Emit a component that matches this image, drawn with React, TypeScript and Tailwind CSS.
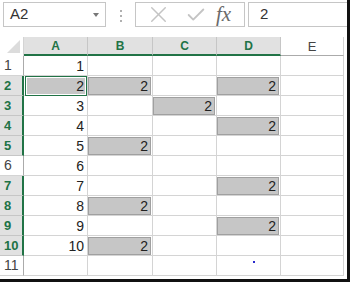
import { X, Check } from 'lucide-react';

const cols = ['A', 'B', 'C', 'D', 'E'];
const colW = ['w-[64px]', 'w-[65px]', 'w-[64px]', 'w-[64px]', 'w-[63px]'];
const selectedRows = [2, 3, 4, 5, 7, 8, 9, 10];
const grayCells: Record<number, string[]> = {
  2: ['B', 'D'],
  3: ['C'],
  4: ['D'],
  5: ['B'],
  7: ['D'],
  8: ['B'],
  9: ['D'],
  10: ['B'],
};

const font = { fontFamily: '"Liberation Sans", Arial, sans-serif' };

function Toolbar() {
  return (
    <div className="flex h-[37px] items-start pt-[2px]">
      {/* Name box */}
      <div className="ml-[3px] flex h-[25px] w-[103px] items-center border border-[#c6c6c6] pl-[6px] pr-[6px]">
        <span className="flex-1 text-[15px] text-[#333]">A2</span>
        <div className="h-0 w-0 border-x-[3.5px] border-t-[4px] border-x-transparent border-t-[#777]" />
      </div>
      {/* separator dots */}
      <div className="flex w-[29px] flex-col items-center gap-[3px] pt-[8px]">
        <div className="h-[2px] w-[2px] bg-[#b0b0b0]" />
        <div className="h-[2px] w-[2px] bg-[#b0b0b0]" />
        <div className="h-[2px] w-[2px] bg-[#b0b0b0]" />
      </div>
      {/* cancel / enter / fx */}
      <div className="flex h-[25px] w-[110px] items-center border border-[#c6c6c6]">
        <div className="flex w-[38px] justify-center pl-[7px]">
          <X size={27} strokeWidth={1.3} color="#c4c4c4" />
        </div>
        <div className="flex w-[38px] justify-center pl-[6px]">
          <Check size={22} strokeWidth={2} color="#c4c4c4" />
        </div>
        <div
          className="flex-1 pl-[4px] text-[21px] italic leading-none text-[#6a6a6a]"
          style={{ fontFamily: '"Liberation Serif", "Times New Roman", serif' }}
        >
          fx
        </div>
      </div>
      {/* formula input */}
      <div className="ml-[3px] flex h-[25px] flex-1 items-center border border-r-0 border-[#c6c6c6] pl-[11px] text-[15px] text-[#333]">
        2
      </div>
    </div>
  );
}

function HeaderRow() {
  return (
    <div className="flex h-[19px]">
      <div className="w-[24px] border-r border-[#d4d4d4]">
        <svg width="23" height="19" className="block">
          <polygon points="20,3 20,16 7,16" fill="#dcdcdc" />
        </svg>
      </div>
      {cols.map((c, i) => {
        const hl = c !== 'E';
        return (
          <div
            key={c}
            className={`${colW[i]} flex items-center justify-center border-r ${
              hl
                ? 'border-b-2 border-r-[#c6c6c6] border-b-[#217346] bg-[#e1e1e1] pt-[1px] text-[12px] font-bold text-[#217346]'
                : 'border-b border-r-[#d4d4d4] border-b-[#ababab] pt-[1px] text-[13px] text-[#444]'
            }`}
          >
            {c}
          </div>
        );
      })}
    </div>
  );
}

function Row({ n }: { n: number }) {
  const sel = selectedRows.includes(n);
  const grays = grayCells[n] || [];
  return (
    <div className="flex h-[20px]">
      <div
        className={`flex w-[24px] items-center border-b pl-[4px] ${
          sel
            ? 'border-r-2 border-r-[#217346] border-b-[#c6c6c6] bg-[#e1e1e1] text-[13px] font-bold text-[#217346]'
            : 'border-r border-r-[#ababab] border-b-[#d4d4d4] text-[14px] text-[#444]'
        }`}
      >
        {n}
      </div>
      {cols.map((c, i) => {
        const isGray = grays.includes(c);
        const isActive = n === 2 && c === 'A';
        return (
          <div key={c} className={`${colW[i]} relative border-b border-r border-[#d4d4d4] text-[14px] text-[#222]`}>
            {isActive && (
              <div className="absolute left-[1px] right-0 top-0 bottom-[-1px] border-[1.5px] border-[#217346] p-px">
                <div className="h-full w-full bg-[#c6c6c6]" />
              </div>
            )}
            {isGray && (
              <div className="absolute left-0 right-[1px] top-[1px] bottom-0 border border-[#a0a0a0] bg-[#c6c6c6]" />
            )}
            {c === 'A' && n <= 10 && (
              <div className="relative flex h-full items-center justify-end pr-[3px] pt-[1px]">{n}</div>
            )}
            {isGray && (
              <div className="relative flex h-full items-center justify-end pr-[4px] pt-[1px]">2</div>
            )}
            {n === 11 && c === 'D' && (
              <div className="absolute left-[36px] top-[5px] h-[2px] w-[2px] bg-[#2a2acc]" />
            )}
          </div>
        );
      })}
    </div>
  );
}

export default function App() {
  return (
    <div
      className="box-border h-[282px] w-[350px] overflow-hidden border-b-[3px] border-r-[3px] border-[#111] bg-white"
      style={font}
    >
      <Toolbar />
      <HeaderRow />
      {Array.from({ length: 11 }, (_, k) => (
        <Row key={k} n={k + 1} />
      ))}
    </div>
  );
}
